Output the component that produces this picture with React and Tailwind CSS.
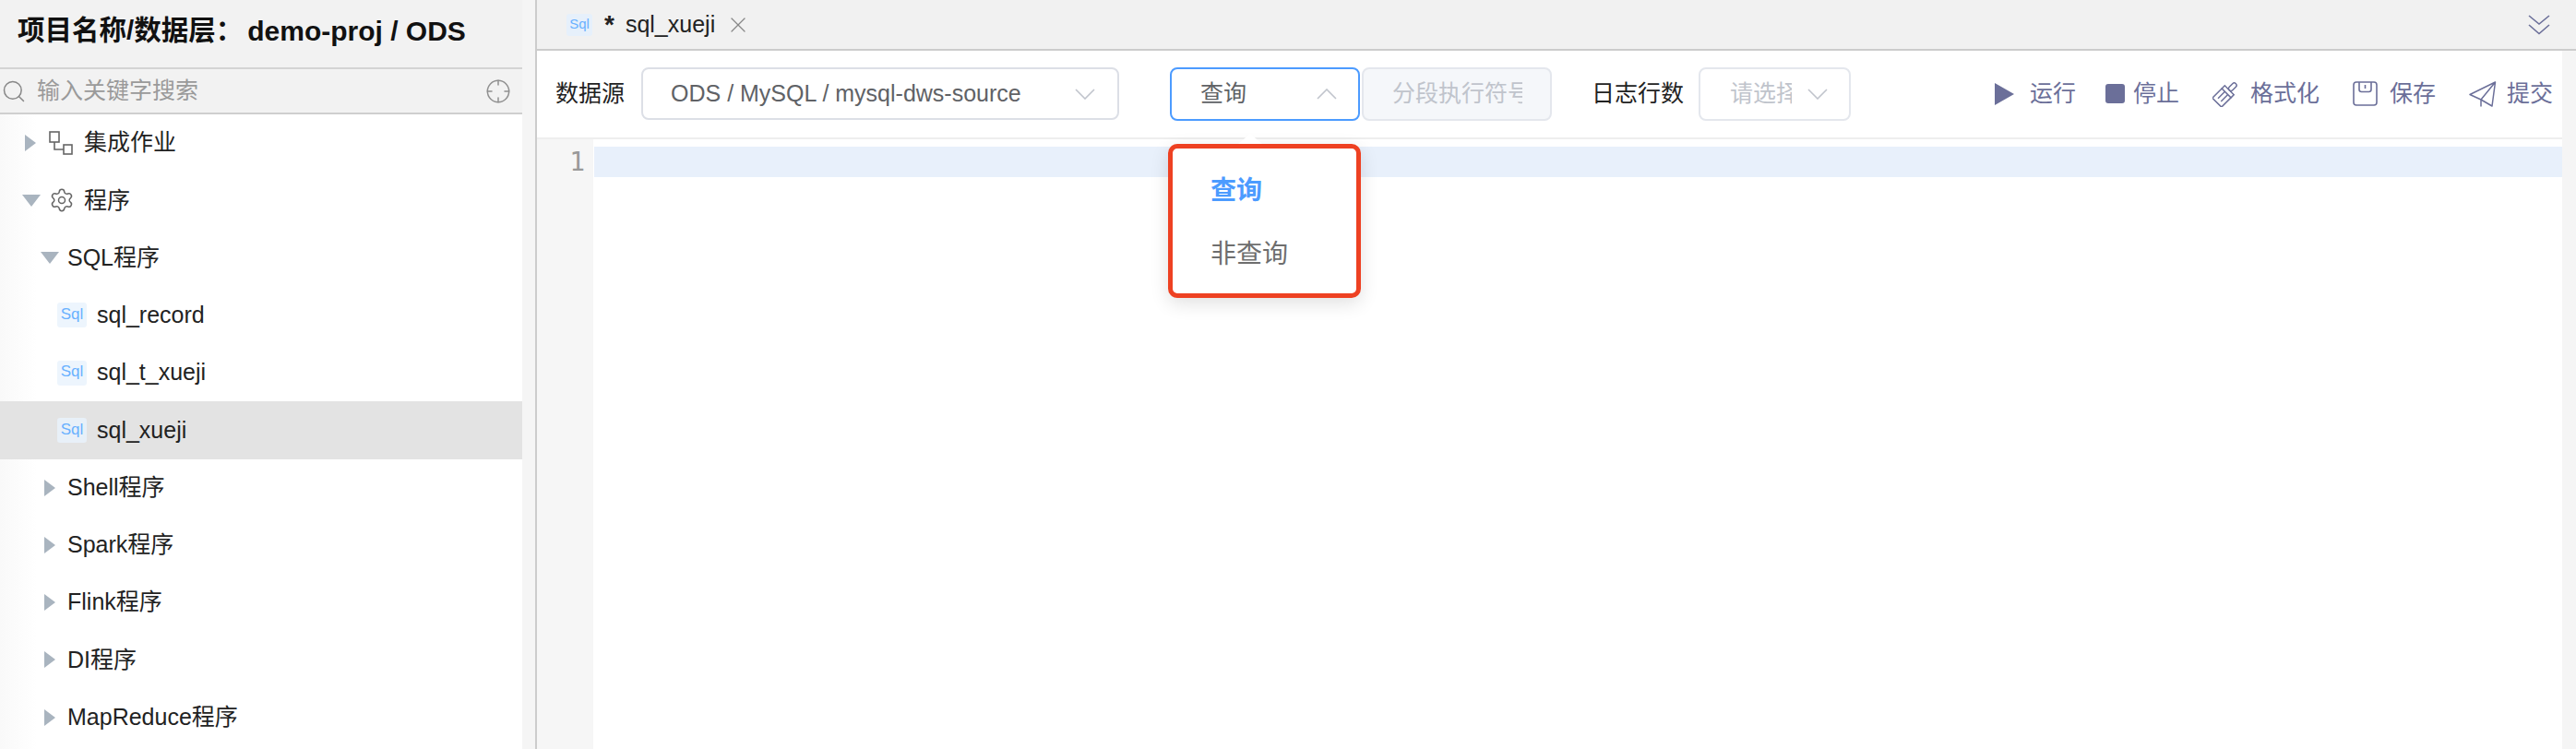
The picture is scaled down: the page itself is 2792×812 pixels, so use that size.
import { Crosshair, Search, Settings, X } from "lucide-react";

const FONT = "font-['Liberation_Sans','Noto_Sans_CJK_SC',sans-serif]";

const SqlBadge = ({ small }) => (
  <span
    className={
      small
        ? "flex h-[24px] w-[28px] items-center justify-center rounded-[3px] bg-[#e6f0fb] text-[15px] text-[#69b1ff]"
        : "flex h-[27px] w-[32px] items-center justify-center rounded-[3px] bg-[#e8f2fd]/80 pb-[2px] text-[17px] text-[#69b1ff]"
    }
  >
    Sql
  </span>
);

const CaretRight = () => (
  <svg width="12" height="18" viewBox="0 0 12 18" className="shrink-0">
    <path d="M0 0 L12 9 L0 18 Z" fill="#a9b4bf" />
  </svg>
);

const CaretDown = () => (
  <svg width="20" height="13" viewBox="0 0 20 13" className="shrink-0">
    <path d="M0 0 H20 L10 13 Z" fill="#a9b4bf" />
  </svg>
);

const FlowIcon = () => (
  <svg width="26" height="26" viewBox="0 0 26 26" fill="none" stroke="#666" strokeWidth="1.6" className="shrink-0">
    <rect x="1" y="1" width="10" height="11" />
    <rect x="16" y="15" width="9" height="10" />
    <path d="M6 12 V20 H16" />
  </svg>
);

const Chevron = ({ up }) => (
  <svg width="22" height="12" viewBox="0 0 22 12" fill="none" stroke="#c0c4cc" strokeWidth="1.6" className="shrink-0">
    <path d={up ? "M1 11 L11 1 L21 11" : "M1 1 L11 11 L21 1"} />
  </svg>
);

const PlayIcon = () => (
  <svg width="21" height="24" viewBox="0 0 21 24" className="shrink-0">
    <path d="M0 0 L21 12 L0 24 Z" fill="#6b6f99" />
  </svg>
);

const BrushIcon = () => (
  <svg width="28" height="28" viewBox="0 0 28 28" fill="none" stroke="#6b6f99" strokeWidth="1.5" className="shrink-0">
    <g transform="rotate(45 14 14)">
      <rect x="11.5" y="-2" width="5" height="10" rx="2.5" />
      <rect x="7" y="8" width="14" height="4.5" />
      <path d="M7 12.5 V27 H21 V12.5 M11.7 12.5 V23 M16.3 12.5 V23" />
    </g>
  </svg>
);

const SaveIcon = () => (
  <svg width="27" height="27" viewBox="0 0 27 27" fill="none" stroke="#6b6f99" strokeWidth="1.6" className="shrink-0">
    <rect x="1" y="1" width="25" height="25" rx="3" />
    <path d="M7 1 V9 A2.5 2.5 0 0 0 9.5 11.5 H17.5 A2.5 2.5 0 0 0 20 9 V1 M13.5 4 V8" />
  </svg>
);

const SendIcon = () => (
  <svg width="30" height="28" viewBox="0 0 30 28" fill="none" stroke="#6b6f99" strokeWidth="1.5" strokeLinejoin="round" className="shrink-0">
    <path d="M28.5 1 L1 14.5 L13 20 L25 27 Z M28.5 1 L13 20 V27.5" />
  </svg>
);

const TreeRow = ({ children, active, className = "" }) => (
  <div className={`flex h-[62.25px] items-center text-[25px] text-[#222] ${active ? "bg-[#e3e3e3]" : ""} ${className}`}>
    {children}
  </div>
);

const programs = ["Shell程序", "Spark程序", "Flink程序", "DI程序", "MapReduce程序"];
const sqlFiles = ["sql_record", "sql_t_xueji", "sql_xueji"];

const Sidebar = () => (
  <aside className="flex w-[566px] shrink-0 flex-col overflow-hidden">
    <div className="flex h-[75px] items-center border-b-2 border-[#d4d4d4] bg-[#f2f2f2] pb-[6px] pl-[19px] text-[29.5px] font-bold whitespace-nowrap text-[#111]">
      项目名称/数据层：<span className="ml-[5px] text-[30px]">demo-proj / ODS</span>
    </div>
    <div className="flex h-[49px] items-center border-b-2 border-[#cfcfcf] bg-[#f2f2f2] pr-[12px] pl-[1px]">
      <Search size={28} strokeWidth={1.3} color="#888" className="shrink-0" />
      <span className="ml-[11px] text-[25px] text-[#9a9a9a]">输入关键字搜索</span>
      <Crosshair size={28} strokeWidth={1.3} color="#909090" className="ml-auto" />
    </div>
    <div className="flex-1 bg-gradient-to-r from-[#f9f9f9] to-white to-[40px]">
      <TreeRow className="pl-[27px]">
        <CaretRight />
        <span className="ml-[14px]"><FlowIcon /></span>
        <span className="ml-[12px]">集成作业</span>
      </TreeRow>
      <TreeRow className="pl-[24px]">
        <CaretDown />
        <Settings size={28} strokeWidth={1.3} color="#666" className="ml-[9px] shrink-0" />
        <span className="ml-[10px]">程序</span>
      </TreeRow>
      <TreeRow className="pl-[44px]">
        <CaretDown />
        <span className="ml-[9px]">SQL程序</span>
      </TreeRow>
      {sqlFiles.map((name) => (
        <TreeRow key={name} active={name === "sql_xueji"} className="pl-[62px]">
          <SqlBadge />
          <span className="ml-[11px]">{name}</span>
        </TreeRow>
      ))}
      {programs.map((name) => (
        <TreeRow key={name} className="pl-[48px]">
          <CaretRight />
          <span className="ml-[13px]">{name}</span>
        </TreeRow>
      ))}
    </div>
  </aside>
);

const Action = ({ icon, label, gap }) => (
  <div className={`flex items-center text-[25px] text-[#6b6f99] ${gap}`}>
    {icon}
    <span>{label}</span>
  </div>
);

const Toolbar = () => (
  <div className="flex h-[94px] shrink-0 items-center pb-[1px] pl-[20px] text-[25px] whitespace-nowrap">
    <span className="text-[#222]">数据源</span>
    <div className="ml-[18px] flex h-[57px] w-[518px] items-center justify-between rounded-[8px] border-2 border-[#dcdfe6] pr-[24px] pl-[30px] text-[#606266]">
      <span>ODS / MySQL / mysql-dws-source</span>
      <Chevron />
    </div>
    <div className="ml-[55px] flex h-[58px] w-[206px] items-center justify-between rounded-[8px] border-2 border-[#4c9bff] pr-[23px] pl-[31px] text-[#606266]">
      <span>查询</span>
      <Chevron up />
    </div>
    <div className="ml-[2px] flex h-[58px] w-[206px] items-center rounded-[8px] border-2 border-[#e4e7ed] bg-[#f5f7fa] pl-[31px] text-[#c0c4cc]">
      <span className="w-[141px] overflow-hidden">分段执行符号</span>
    </div>
    <span className="ml-[43px] text-[#222]">日志行数</span>
    <div className="ml-[16px] flex h-[58px] w-[165px] items-center rounded-[8px] border-2 border-[#e4e7ed] pl-[32px] text-[#c0c4cc]">
      <span className="w-[67px] overflow-hidden">请选择</span>
      <span className="ml-[17px]"><Chevron /></span>
    </div>
    <div className="ml-[156px] flex items-center">
      <Action icon={<PlayIcon />} label="运行" gap="gap-[17px]" />
      <Action
        icon={<span className="h-[21px] w-[21px] rounded-[3px] bg-[#6b6f99]" />}
        label="停止"
        gap="ml-[32px] gap-[9px]"
      />
      <Action icon={<BrushIcon />} label="格式化" gap="ml-[36px] gap-[13px]" />
      <Action icon={<SaveIcon />} label="保存" gap="ml-[36px] gap-[13px]" />
      <Action icon={<SendIcon />} label="提交" gap="ml-[36px] gap-[11px]" />
    </div>
  </div>
);

const Dropdown = () => (
  <div className="absolute top-[145px] left-[1266px] flex flex-col items-center">
    <div className="absolute top-0 left-[76px] h-0 w-0 border-x-[13px] border-b-[11px] border-x-transparent border-b-white" />
    <div className="mt-[11px] flex h-[167px] w-[209px] flex-col rounded-[10px] border-[5px] border-[#ee4122] bg-white pt-[11px] pl-[41px] text-[28px] shadow-[0_6px_20px_rgba(0,0,0,0.12)]">
      <div className="flex h-[69px] items-center font-bold text-[#4c9bff]">查询</div>
      <div className="flex h-[69px] items-center text-[#6e6e6e]">非查询</div>
    </div>
  </div>
);

export default function App() {
  return (
    <div className={`${FONT} relative flex h-screen overflow-hidden bg-[#f5f5f5]`}>
      <Sidebar />
      <main className="ml-[14px] flex min-w-0 flex-1 flex-col border-l-2 border-[#cccccc]">
        <div className="flex h-[55px] shrink-0 items-center border-b-2 border-[#cccccc] bg-[#f1f1f1] pr-[28px] pl-[32px] text-[25px] text-[#222]">
          <SqlBadge small />
          <span className="ml-[13px] text-[28px] leading-[30px] font-bold">*</span>
          <span className="ml-[12px]">sql_xueji</span>
          <X size={28} strokeWidth={1.1} color="#888" className="ml-[11px]" />
          <svg width="24" height="22" viewBox="0 0 24 22" fill="none" stroke="#6b6f99" strokeWidth="1.6" className="ml-auto">
            <path d="M1 1 L12 10 L23 1 M1 11 L12 20.5 L23 11" />
          </svg>
        </div>
        <div className="mr-[15px] flex min-h-0 flex-1 flex-col bg-white">
          <Toolbar />
          <div className="flex flex-1 border-t-2 border-[#eeeeee]">
            <div className="w-[61px] shrink-0 bg-[#f6f6f6] pt-[8px] pr-[9px] text-right font-['DejaVu_Sans_Mono',monospace] text-[28px] leading-[33px] text-[#999]">
              1
            </div>
            <div className="flex-1 pt-[8px] pl-[1px]">
              <div className="h-[33px] bg-[#e8f0fb]" />
            </div>
          </div>
        </div>
      </main>
      <Dropdown />
    </div>
  );
}
